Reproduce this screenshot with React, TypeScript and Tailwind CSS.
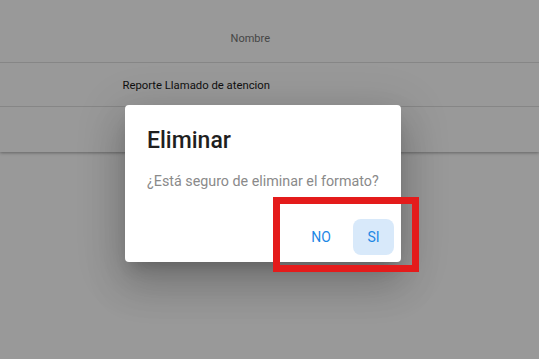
export default function App() {
  return (
    <div className="relative h-[359px] w-[539px] overflow-hidden bg-white font-['Roboto',sans-serif]">
      <div className="shadow-[0_1px_3px_rgba(0,0,0,0.35)]">
        <div className="flex h-[63px] items-center border-b border-[#e0e0e0]">
          <div className="w-[270px] pt-[16px] text-right text-[11px] text-[#757575]">Nombre</div>
        </div>
        <div className="flex h-[44px] items-center border-b border-[#e0e0e0]">
          <div className="w-[270px] pt-[3px] text-right text-[11.3px] text-[#1a1a1a]">Reporte Llamado de atencion</div>
        </div>
        <div className="h-[45px]" />
      </div>

      <div className="absolute inset-0 bg-black/40">
        <div className="ml-[125px] mt-[105px] flex h-[157px] w-[276px] flex-col rounded bg-white shadow-[0_11px_15px_-7px_rgba(0,0,0,0.2),0_24px_38px_3px_rgba(0,0,0,0.14),0_9px_46px_8px_rgba(0,0,0,0.12)]">
          <h2 className="px-[22px] pt-[20px] text-[23px] font-medium leading-[32px] text-[#1f1f1f]">Eliminar</h2>
          <p className="mt-[12px] whitespace-nowrap px-[22px] text-[14.3px] leading-[24px] text-[#8a8a8a]">
            ¿Está seguro de eliminar el formato?
          </p>
          <div className="mt-auto flex items-center justify-end gap-[4px] pb-[7px] pr-[7px]">
            <button type="button" className="h-[36px] w-[56px] rounded-lg text-[14px] text-[#1e88e5]">
              NO
            </button>
            <button type="button" className="h-[36px] w-[41px] rounded-lg bg-[#d8e9fa] text-[14px] text-[#1e88e5]">
              SI
            </button>
          </div>
        </div>
      </div>

      <div className="absolute left-[273px] top-[197px] h-[75px] w-[146px] border-[7px] border-[#e41b1b]" />
    </div>
  );
}
